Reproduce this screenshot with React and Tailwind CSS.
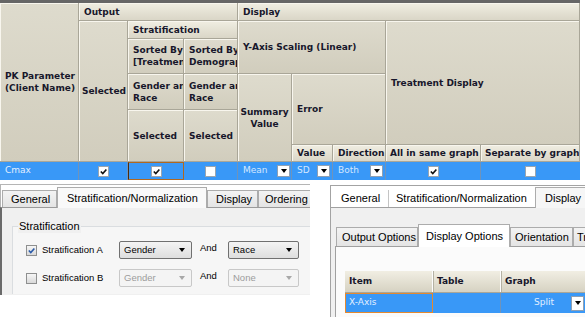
import React from 'react';

const Check = ({ color = '#111', className = '' }) => (
  <svg viewBox="0 0 10 10" className={className}>
    <path d="M2 5 L4.2 7.2 L8.2 2.8" fill="none" stroke={color} strokeWidth="1.8" />
  </svg>
);

const GridBox = ({ checked }) => (
  <div className="w-[11px] h-[11px] bg-white border border-[#9aa5b0] flex items-center justify-center">
    {checked && <Check className="w-[9px] h-[9px]" />}
  </div>
);

const DropBtn = ({ className = '' }) => (
  <div className={`w-[13px] h-[12px] bg-white border border-[#8ea0b4] flex items-center justify-center ${className}`}>
    <div className="w-0 h-0 border-l-[3.5px] border-r-[3.5px] border-t-[4px] border-l-transparent border-r-transparent border-t-black" />
  </div>
);

const Head = ({ className = '', light, center, children }) => (
  <div
    className={`${light ? 'bg-linear-to-b from-[#f0eee2] to-[#dad6c7]' : 'bg-linear-to-b from-[#dedbcd] to-[#d1cdbd]'} border-r border-b border-[#a9a698] shadow-[inset_1px_1px_0_#f8f6ee] flex flex-col justify-center ${center ? 'items-center text-center' : 'pl-[5px]'} overflow-hidden whitespace-nowrap font-bold text-[9px] leading-[12px] text-[#17172b] ${className}`}
  >
    {children}
  </div>
);

const Cell = ({ className = '', children }) => (
  <div className={`bg-[#3998f7] border-r border-[#6f93ba] flex items-center overflow-hidden ${className}`}>
    {children}
  </div>
);

const Tab = ({ className = '', selected, children }) => (
  <div
    className={`${selected ? 'bg-[#f9f9f9] h-[21px] -mb-px relative z-10' : 'bg-linear-to-b from-[#f3f3f3] to-[#e4e4e4] h-[17px]'} border border-b-0 border-[#acacac] flex items-center shrink-0 whitespace-nowrap text-[11px] text-black ${className}`}
  >
    {children}
  </div>
);

const Combo = ({ label, disabled, className = '' }) => (
  <div
    className={`h-[18px] rounded-[2px] border flex items-center justify-between pl-[4px] pr-[6px] text-[9.5px] ${disabled ? 'border-[#c8c8c8] bg-[#f4f4f4] text-[#9c9c9c]' : 'border-[#707070] bg-linear-to-b from-[#f4f4f4] to-[#dedede] text-black'} ${className}`}
  >
    <span className="mt-[1px]">{label}</span>
    <div className={`w-0 h-0 border-l-[3.5px] border-r-[3.5px] border-t-[4px] border-l-transparent border-r-transparent ${disabled ? 'border-t-[#a8a8a8]' : 'border-t-black'}`} />
  </div>
);

const StratRow = ({ checked, label, a, b, disabled, className = '' }) => (
  <div className={`flex items-center h-[18px] ${className}`}>
    <div className="ml-[13px] w-[11px] h-[11px] border border-[#8e8f8f] bg-linear-to-b from-[#f6f6f6] to-[#d9d9d9] flex items-center justify-center">
      {checked && <Check color="#2a5aa8" className="w-[9px] h-[9px]" />}
    </div>
    <div className="ml-[5px] w-[77px] text-[9.5px] text-black">{label}</div>
    <Combo label={a} disabled={disabled} className="w-[73px]" />
    <div className="ml-[8px] w-[28px] text-[9.5px] text-black -mt-[4px]">And</div>
    <Combo label={b} disabled={disabled} className="w-[71px]" />
  </div>
);

export default function App() {
  return (
    <div className="w-[585px] h-[317px] bg-white overflow-hidden">
      {/* output settings grid */}
      <div className="w-[580px] border-t-[3px] border-[#666666] font-['DejaVu_Sans',sans-serif]">
        <div className="grid grid-cols-[79px_49px_56px_54px_54px_41px_53px_95px_99px] grid-rows-[18px_18px_35px_36px_35px_17px_18px]">
          <Head className="col-start-1 row-start-1 row-span-6">
            <div>PK Parameter</div>
            <div>(Client Name)</div>
          </Head>
          <Head light className="col-start-2 col-span-3 row-start-1">Output</Head>
          <Head light className="col-start-5 col-span-5 row-start-1">Display</Head>
          <Head className="col-start-2 row-start-2 row-span-5 !pl-[3px]">Selected</Head>
          <Head light className="col-start-3 col-span-2 row-start-2">Stratification</Head>
          <Head className="col-start-3 row-start-3">
            <div>Sorted By</div>
            <div>[Treatment]</div>
          </Head>
          <Head className="col-start-4 row-start-3">
            <div>Sorted By</div>
            <div>Demographics</div>
          </Head>
          <Head className="col-start-3 row-start-4">
            <div>Gender and</div>
            <div>Race</div>
          </Head>
          <Head className="col-start-4 row-start-4">
            <div>Gender and</div>
            <div>Race</div>
          </Head>
          <Head className="col-start-3 row-start-5 row-span-2">Selected</Head>
          <Head className="col-start-4 row-start-5 row-span-2">Selected</Head>
          <Head className="col-start-5 col-span-3 row-start-2 row-span-2">Y-Axis Scaling (Linear)</Head>
          <Head center className="col-start-5 row-start-4 row-span-3">
            <div>Summary</div>
            <div>Value</div>
          </Head>
          <Head className="col-start-6 col-span-2 row-start-4 row-span-2">Error</Head>
          <Head light className="col-start-6 row-start-6">Value</Head>
          <Head light className="col-start-7 row-start-6">Direction</Head>
          <Head className="col-start-8 col-span-2 row-start-2 row-span-4">Treatment Display</Head>
          <Head light className="col-start-8 row-start-6 !pl-[4px]">All in same graph</Head>
          <Head light className="col-start-9 row-start-6 !pl-[4px]">Separate by graph</Head>

          {/* data row */}
          <Cell className="col-start-1 row-start-7 pl-[5px] text-[9px] text-[#e2efff]">Cmax</Cell>
          <Cell className="col-start-2 row-start-7 justify-center"><GridBox checked /></Cell>
          <Cell className="col-start-3 row-start-7 justify-center border-t border-b border-[#b0681f] border-l border-l-[#4a2c10] border-r-[#b0681f]"><GridBox checked /></Cell>
          <Cell className="col-start-4 row-start-7 justify-center"><GridBox /></Cell>
          <Cell className="col-start-5 row-start-7 justify-between pl-[5px] pr-[1px] text-[9px] text-[#d4e7ff]">Mean<DropBtn /></Cell>
          <Cell className="col-start-6 row-start-7 justify-between pl-[5px] pr-[2px] text-[9px] text-[#d4e7ff]">SD<DropBtn /></Cell>
          <Cell className="col-start-7 row-start-7 justify-between pl-[5px] pr-[2px] text-[9px] text-[#d4e7ff]">Both<DropBtn /></Cell>
          <Cell className="col-start-8 row-start-7 justify-center"><GridBox checked /></Cell>
          <Cell className="col-start-9 row-start-7 justify-center border-r-0"><GridBox /></Cell>
        </div>
      </div>

      <div className="flex items-start font-['Liberation_Sans',sans-serif]">
        {/* stratification dialog */}
        <div className="w-[310px] h-[115px] flex flex-col overflow-hidden">
          <div className="h-[4px] bg-white" />
          <div className="h-[23px] border-t border-l border-[#b5b5b5] flex items-end bg-white pl-[1px]">
            <Tab className="w-[55px] pl-[8px]">General</Tab>
            <Tab selected className="w-[150px] pl-[9px]">Stratification/Normalization</Tab>
            <Tab className="w-[51px] pl-[8px]">Display</Tab>
            <Tab className="w-[60px] pl-[6px]">Ordering</Tab>
          </div>
          <div className="flex-1 bg-[#f0f0f0] border-t border-[#9a9a9a] border-l-2 border-l-[#6a6a6a] pl-[10px] pt-[18px]">
            <div className="relative h-[68px] border-t border-l border-[#dadde0] bg-[#f6f6f6] pt-[14px]">
              <div className="absolute -top-[7px] left-[5px] px-[1px] bg-[#f0f0f0] text-[11px] leading-[13px] text-black">Stratification</div>
              <StratRow checked label="Stratification A" a="Gender" b="Race" />
              <StratRow disabled label="Stratification B" a="Gender" b="None" className="mt-[10px]" />
            </div>
          </div>
        </div>

        {/* display options dialog */}
        <div className="ml-[20px] mt-[5px] w-[255px] h-[132px] border-t border-l border-[#a3a3a3] flex flex-col overflow-hidden">
          <div className="h-[21px] flex items-end bg-white pl-[2px]">
            <Tab className="w-[56px] pl-[8px] !bg-none !bg-white border-t-0 border-l-0 border-[#c4c4c4]">General</Tab>
            <Tab className="w-[146px] pl-[7px] !bg-none !bg-white border-t-0 border-l-0 border-r-0">Stratification/Normalization</Tab>
            <Tab selected className="w-[60px] pl-[9px] !bg-[#f6f6f6]">Display</Tab>
          </div>
          <div className="flex-1 bg-[#f0f0f0] border-t border-[#a0a0a0] pl-[4px] pt-[16px] flex flex-col">
            <div className="h-[22px] flex items-end pl-[1px]">
              <Tab className="w-[82px] h-[19px] pl-[5px]">Output Options</Tab>
              <Tab selected className="w-[92px] h-[23px] pl-[7px] !bg-white">Display Options</Tab>
              <Tab className="w-[63px] h-[19px] pl-[4px]">Orientation</Tab>
              <Tab className="w-[30px] h-[19px] pl-[3px]">Tr</Tab>
            </div>
            <div className="flex-1 bg-[#fbfbfb] border-t border-l border-[#a0a0a0] pl-[9px] pt-[24px]">
              <div className="font-['DejaVu_Sans',sans-serif]">
                <div className="flex h-[22px] bg-linear-to-b from-[#f1eee3] to-[#d6d2c2] border-b border-[#a9a698] font-bold text-[9px] text-[#17172b]">
                  <div className="w-[88px] pl-[4px] flex items-center border-r border-[#fdfdfd] shadow-[1px_0_0_#b5b2a4]">Item</div>
                  <div className="w-[68px] pl-[4px] flex items-center border-r border-[#fdfdfd] shadow-[1px_0_0_#b5b2a4]">Table</div>
                  <div className="flex-1 pl-[4px] flex items-center">Graph</div>
                </div>
                <div className="flex h-[20px] bg-[#3998f7] text-[9px] text-[#e2efff]">
                  <div className="w-[88px] pl-[3px] flex items-center border-[1.5px] border-[#e5892e]">X-Axis</div>
                  <div className="w-[68px] border-r border-[#6f93ba]" />
                  <div className="flex-1 flex items-center justify-end pr-[1px]">
                    <span className="mr-[17px]">Split</span>
                    <DropBtn className="h-[15px]" />
                  </div>
                </div>
              </div>
            </div>
          </div>
        </div>
      </div>
    </div>
  );
}
